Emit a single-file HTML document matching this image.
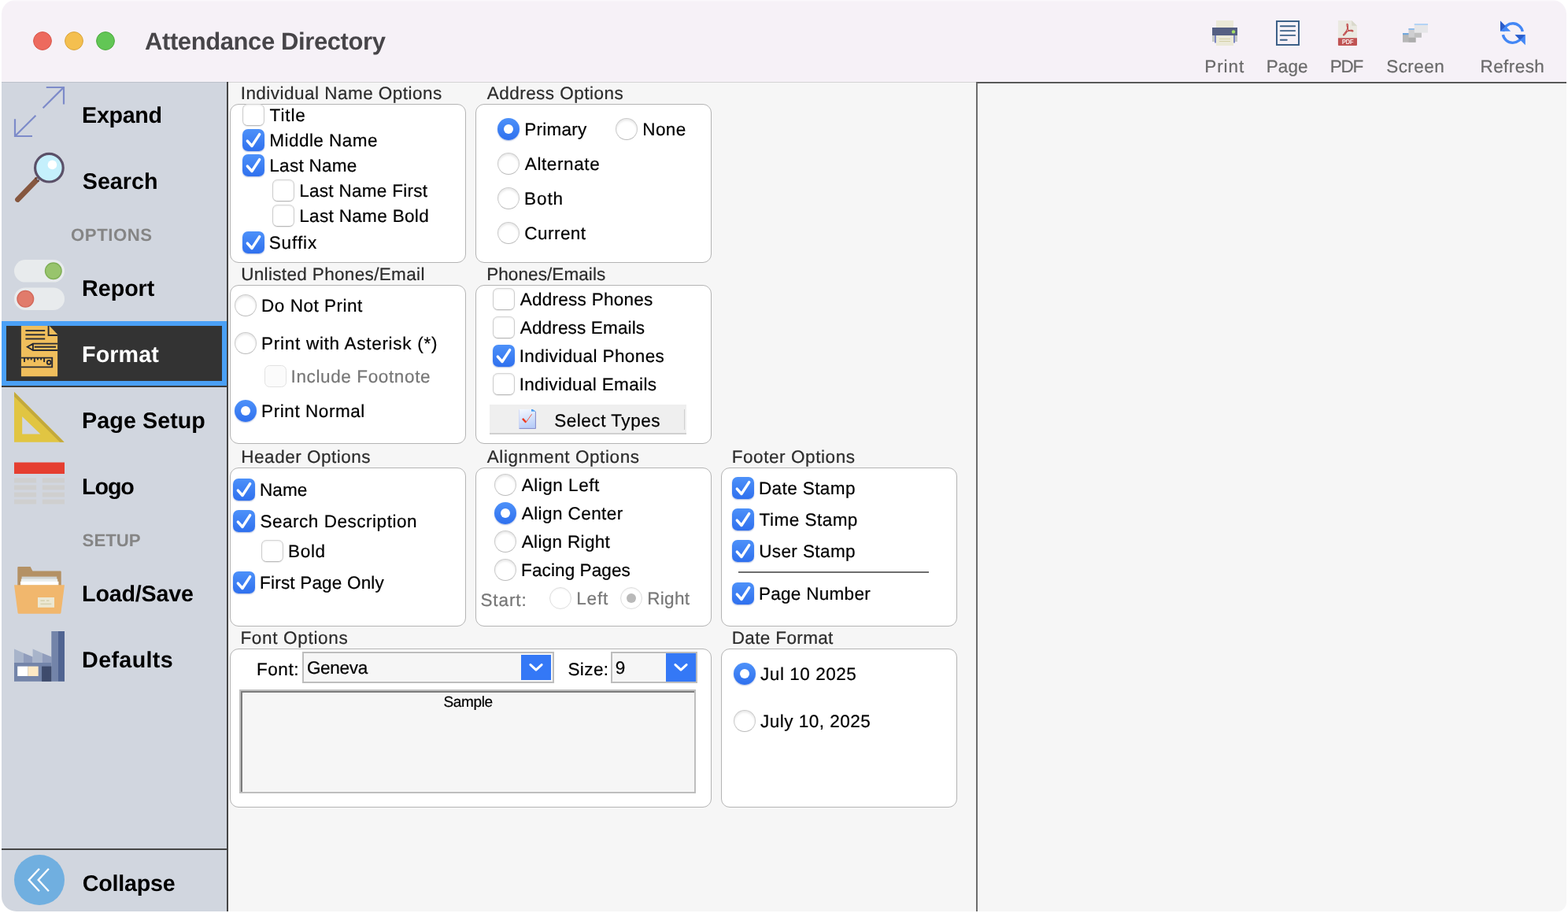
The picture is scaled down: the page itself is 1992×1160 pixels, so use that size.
<!DOCTYPE html>
<html lang="en"><head><meta charset="utf-8"><title>Attendance Directory</title>
<style>
*{box-sizing:border-box;margin:0;padding:0}
html,body{width:1992px;height:1160px;overflow:hidden;background:#fff}
body{font-family:"Liberation Sans",sans-serif;position:relative}
#win{position:absolute;left:0;top:0;width:1992px;height:1160px;clip-path:inset(0px 2px 2px 2px round 18px 18px 12px 19px);will-change:transform;background:#f6f6f6}
#win *{position:absolute}
#tb{left:0;top:0;width:1992px;height:104px;background:linear-gradient(#faf8fb 0,#faf8fb 1px,#f8f4f9 1px,#f8f4f9 2px,#f6f1f7 2px)}
#side{left:0;top:104px;width:288px;height:1056px;background:#d1d6df}
#sidetop{left:0;top:104px;width:288px;height:1px;background:#bcc1cb}
#sideb{left:288px;top:104px;width:2px;height:1056px;background:#454545}
#cline{left:290px;top:104px;width:950px;height:1px;background:#d4d4d4}
#pv{left:1240px;top:104px;width:752px;height:1056px;border-left:2px solid #6c6c6c;border-top:2px solid #585858;background:#f6f6f6}
#pvin{left:1242px;top:106px;width:750px;height:1px;background:#fdfdfd}
.t{white-space:nowrap;color:#000;text-rendering:geometricPrecision;-webkit-text-stroke:0.22px currentColor}
.gb{background:#fff;border:1px solid #b4b4b4;border-radius:11px}
.t.b{-webkit-text-stroke:0}
svg{overflow:visible}

.cb{width:28px;height:28px;border-radius:7px}
.cb.on{background:linear-gradient(#4d91f9,#2f70ee);box-shadow:0 1px 1.5px rgba(20,60,160,.35)}
.cb.off{background:#fff;border:1px solid #cdcdcd;border-bottom-color:#b9b9b9;border-top-color:#d6d6d6;box-shadow:inset 0 1px 2px rgba(0,0,0,.07),0 0.5px 1px rgba(0,0,0,.08);border-radius:6.5px}
.cb.off.dis{border-color:#e2e2e2;box-shadow:none;background:#fbfbfb}
.rb{width:28px;height:28px;border-radius:50%}
.rb.on{background:linear-gradient(#4d91f9,#2f70ee);box-shadow:0 1px 1.5px rgba(20,60,160,.35)}
.rb.on i{left:8px;top:8px;width:12px;height:12px;border-radius:50%;background:#fff}
.rb.off{background:#fff;border:1px solid #cbcbcb;border-bottom-color:#bcbcbc;box-shadow:inset 0 2px 3px rgba(0,0,0,.10)}
.rb.off.dis{border-color:#dedede;box-shadow:inset 0 1px 2px rgba(0,0,0,.06)}
.rb.off i.g{left:7px;top:7px;width:12px;height:12px;border-radius:50%;background:#b9b9b9}

#selbtn{background:#efefef;border-bottom:2px solid #d0d0d0}
.combo{background:#f6f6f6;border:2px solid #bdbdbd}
.cbtn{background:#3478f6}
#sample{background:#f6f6f6;border:2px solid #bebebe;box-shadow:inset 2px 2px 0 0 #7b7b7b,inset 3px 3px 0 0 #fdfdfd}
</style></head>
<body>
<div id="win"><div id="tb"></div><div id="side"></div><div id="sidetop"></div><div id="sideb"></div><div id="cline"></div><div id="pv"></div><div id="pvin"></div><div id="sepline" style="left:0;top:1078px;width:288px;height:2px;background:#454545"></div><div style="left:0;top:408px;width:288px;height:82px;background:#4aa0f6"></div>
<div style="left:8px;top:414px;width:274px;height:70px;background:#333333"></div>
<div style="left:0;top:490px;width:288px;height:2px;background:#3a3a3a"></div>
<svg width="288" height="84" viewBox="0 408 288 84" style="left:0;top:408px">
<path d="M26.9 414 H62.8 L73.1 424.9 V478.3 H26.9 Z" fill="#f0be5c"/>
<g fill="none" stroke="#272a34" stroke-width="1.9">
<path d="M61.6 414 V426 H73.1"/>
<path d="M32.4 420.1 H57.2"/>
<path d="M32.4 425.3 H57.2"/>
<path d="M32.4 430.5 H57.2"/>
<path d="M73.1 436.6 H41.9 L34.8 440.8 L41.9 445 H73.1 M41.9 436.6 V445 M43.8 440.8 H71"/>
<path d="M26.9 454.6 H66.2 V466.4 H26.9"/>
<path d="M31 454.6 V460"/>
<path d="M35.5 454.6 V457.4"/>
<path d="M39.7 454.6 V457.4"/>
<path d="M43.8 454.6 V460"/>
<path d="M47.9 454.6 V457.4"/>
<path d="M52.1 454.6 V457.4"/>
<path d="M56.1 454.6 V460"/>
<circle cx="62.2" cy="460.4" r="2.4"/>
</g></svg><svg id="ico" width="1992" height="1160" viewBox="0 0 1992 1160" style="left:0;top:0">
<defs><filter id="blr" x="-10%" y="-10%" width="120%" height="120%"><feGaussianBlur stdDeviation="0.45"/></filter></defs>
<circle cx="54" cy="52" r="11.4" fill="#ed6a5e" stroke="#d8554a" stroke-width="1"/>
<circle cx="94" cy="52" r="11.4" fill="#f4bf4f" stroke="#d9a43a" stroke-width="1"/>
<circle cx="134" cy="52" r="11.4" fill="#62c655" stroke="#4ba93d" stroke-width="1"/>
<rect x="1545" y="26" width="22" height="10" fill="#ebe9d8"/>
<rect x="1540" y="44" width="4" height="9" fill="#c5c8c6"/><rect x="1568" y="44" width="4" height="9" fill="#c5c8c6"/>
<rect x="1543" y="44" width="2" height="10.5" fill="#7b85c1"/><rect x="1567" y="44" width="2" height="10.5" fill="#7b85c1"/>
<rect x="1545" y="44" width="22" height="14" fill="#ebe9d8"/>
<rect x="1540" y="35" width="32" height="10" fill="#555f82"/>
<circle cx="1567" cy="40.4" r="2.2" fill="#a6e066"/>
<rect x="1549" y="49" width="14" height="1" fill="#d3cfa6"/><rect x="1549" y="52" width="14" height="1" fill="#d3cfa6"/>
<rect x="1622" y="27" width="28" height="30" fill="none" stroke="#3d6088" stroke-width="2"/>
<path d="M1626.8 33.2 H1645.2" stroke="#3d6088" stroke-width="1.9" stroke-linecap="round"/>
<path d="M1626.8 39.1 H1645.2" stroke="#3d6088" stroke-width="1.9" stroke-linecap="round"/>
<path d="M1626.8 44.9 H1645.2" stroke="#3d6088" stroke-width="1.9" stroke-linecap="round"/>
<path d="M1626.8 50.8 H1634.8" stroke="#3d6088" stroke-width="1.9" stroke-linecap="round"/>
<path d="M1699.9 26 H1717.2 L1724 32.8 V48.2 H1699.9 Z" fill="#eae9e1"/>
<path d="M1717.2 26 L1724 32.8 H1717.2 Z" fill="#d9d8cb"/>
<path d="M1699.9 48.2 H1724 V56.9 Q1724 57.9 1723 57.9 H1700.9 Q1699.9 57.9 1699.9 56.9 Z" fill="#c05353"/>
<text x="1705" y="56" font-family="Liberation Sans, sans-serif" font-weight="400" font-size="8.3" fill="#fff" stroke="#fff" stroke-width="0.2" textLength="14.4" lengthAdjust="spacingAndGlyphs">PDF</text>
<path d="M1711.6 30.2 C1710.6 30.2 1710.8 33 1711.9 35.6 C1711.3 38.2 1709.4 41.3 1707.3 43.2 C1705.6 44.6 1706.6 45.6 1707.9 44.4 C1709.5 42.9 1710.6 41.2 1711.4 39.9 C1713.4 39.3 1715.8 39.0 1717.6 39.8 C1719.4 40.6 1719.6 38.8 1717.6 38.4 C1716 38.1 1714.2 38.3 1712.8 38.7 C1712.2 37 1712.6 33.6 1712.4 31.6 C1712.3 30.6 1712 30.2 1711.6 30.2 Z" fill="none" stroke="#c04a4a" stroke-width="1.1" stroke-linejoin="round"/>
<g filter="url(#blr)">
<rect x="1782" y="42" width="16.5" height="11.7" fill="#b7b7b7"/><rect x="1789.5" y="47.6" width="9" height="6.1" fill="#adadad"/><rect x="1782" y="42" width="8" height="2.2" fill="#72a7dc"/>
<rect x="1789.5" y="36" width="16.4" height="11.6" fill="#cfcfd1"/><rect x="1796.8" y="41.6" width="9.1" height="6" fill="#c0c0c0"/><rect x="1789.5" y="36" width="7.5" height="2" fill="#8fbbe8"/>
<rect x="1796.8" y="30" width="17.2" height="11.6" fill="#e6e6e8"/><rect x="1796.8" y="30" width="17.2" height="2" fill="#b4d3f5"/>
</g>
<path d="M1909.6 39.8 A12.6 12.6 0 0 1 1934.3 40" fill="none" stroke="#4387f5" stroke-width="3.4"/>
<path d="M1934.1 44.3 A12.6 12.6 0 0 1 1909.4 44.2" fill="none" stroke="#4387f5" stroke-width="3.4"/>
<path d="M1906 26.6 V39.8 H1919.2 Z" fill="#4387f5"/><path d="M1906 26.6 V39.8 L1912.6 33.2 Z" fill="#2b5cc9"/>
<path d="M1937.8 57.2 V44.3 H1924.6 Z" fill="#4387f5"/><path d="M1924.6 44.3 H1937.8 L1931.2 50.8 Z" fill="#2b5cc9"/>
<g fill="none" stroke="#7d8bc9" stroke-width="2.2" stroke-linecap="butt"><path d="M54.6 137.2 L81 110.9"/><path d="M58.8 111 H81 V132.6"/><path d="M45.4 146.8 L19 173"/><path d="M41 173 H19 V151.2"/></g>
<path d="M46.6 228.6 L22.4 253.6" stroke="#86573f" stroke-width="6.6" stroke-linecap="round"/>
<path d="M44.5 225.8 L49.4 230.7" stroke="#5c3a30" stroke-width="1.6"/>
<path d="M50.6 225.2 L47.2 228.6" stroke="#9b9aa8" stroke-width="2.6"/>
<circle cx="62.4" cy="213.2" r="17.8" fill="#c5f0fc" stroke="#5b5068" stroke-width="3.2"/>
<circle cx="66.4" cy="209.4" r="5.8" fill="#fff"/>
<rect x="18" y="330" width="64" height="28.6" rx="14.3" fill="#e8ebed"/>
<circle cx="67.8" cy="344.3" r="10.3" fill="#98c46c" stroke="#7fae55" stroke-width="1.4"/>
<rect x="18" y="365.4" width="64" height="28.6" rx="14.3" fill="#e8ebed"/>
<circle cx="32.3" cy="379.7" r="10.3" fill="#e17b6b" stroke="#d3695b" stroke-width="1.4"/>
<path d="M18 498 L81.6 561.8 H18 Z M28.2 529.2 V551.6 H51.4 Z" fill="#e1c542" fill-rule="evenodd"/>
<path d="M18 498 L81.6 561.8 H76 L18 503.8 Z" fill="#c3a93c"/>
<rect x="18" y="587.5" width="64" height="14.5" fill="#e53e30"/>
<rect x="18" y="607.4" width="28.2" height="6" fill="#cfcfcf"/><rect x="53.8" y="607.4" width="28.2" height="6" fill="#cfcfcf"/>
<rect x="18" y="616.4" width="28.2" height="6" fill="#cfcfcf"/><rect x="53.8" y="616.4" width="28.2" height="6" fill="#cfcfcf"/>
<rect x="18" y="625.5" width="28.2" height="6" fill="#cfcfcf"/><rect x="53.8" y="625.5" width="28.2" height="6" fill="#cfcfcf"/>
<rect x="18" y="634.5" width="28.2" height="6" fill="#cfcfcf"/><rect x="53.8" y="634.5" width="28.2" height="6" fill="#cfcfcf"/>
<path d="M22.3 721 Q22.3 720 23.3 720 H38.6 L41.4 725.5 H76.7 Q77.7 725.5 77.7 726.5 V744 H22.3 Z" fill="#b49164"/>
<rect x="27.6" y="732.6" width="44.6" height="4" fill="#cfd3d3"/>
<rect x="26.8" y="735.6" width="46.4" height="4" fill="#e8eded"/>
<rect x="26" y="738.8" width="48.4" height="5" fill="#ffffff"/>
<path d="M18 743.2 H82 L77.4 778.8 Q77.2 779.8 76.2 779.8 H23.8 Q22.8 779.8 22.6 778.8 Z" fill="#f1b76d"/>
<rect x="48" y="759" width="21" height="12.8" fill="#ece8d3"/>
<rect x="51.4" y="762.4" width="5.4" height="1.6" fill="#d6d2b0"/><rect x="59" y="762.4" width="3.4" height="1.6" fill="#d6d2b0"/><rect x="51.4" y="766.6" width="14" height="1.6" fill="#d6d2b0"/>
<rect x="18" y="842" width="47.4" height="23.8" fill="#7384a9"/>
<path d="M18 824.6 L30 829.8 V842 H18 Z" fill="#a8b4ca"/><path d="M30 829.8 L41.6 834.6 V842 H30 Z" fill="#909dbc"/>
<path d="M41.6 824.6 L53.6 829.8 V842 H41.6 Z" fill="#a8b4ca"/><path d="M53.6 829.8 L65.4 834.6 V842 H53.6 Z" fill="#909dbc"/>
<rect x="65.3" y="802" width="8.7" height="63.8" fill="#7384a9"/><rect x="74" y="802" width="8" height="63.8" fill="#506491"/>
<rect x="22.2" y="846.6" width="13.2" height="12.4" fill="#ffffff"/><rect x="35.4" y="846.6" width="13.3" height="12.4" fill="#fce8c4"/>
<rect x="53.1" y="846.6" width="12.2" height="19.2" fill="#3e4b6c"/>
<circle cx="50" cy="1118" r="32" fill="#70afe0"/>
<g fill="none" stroke="#fff" stroke-width="2.3" stroke-linecap="butt" stroke-linejoin="miter"><path d="M49.9 1103.8 L36.7 1118 L49.9 1132.2"/><path d="M61.9 1103.8 L48.7 1118 L61.9 1132.2"/></g>
</svg><div class="gb" style="left:292px;top:132px;width:300px;height:202px"></div>
<div class="gb" style="left:604px;top:132px;width:300px;height:202px"></div>
<div class="gb" style="left:292px;top:362px;width:300px;height:202px"></div>
<div class="gb" style="left:604px;top:362px;width:300px;height:202px"></div>
<div class="gb" style="left:292px;top:594px;width:300px;height:202px"></div>
<div class="gb" style="left:604px;top:594px;width:300px;height:202px"></div>
<div class="gb" style="left:916px;top:594px;width:300px;height:202px"></div>
<div class="gb" style="left:292px;top:824px;width:612px;height:202px"></div>
<div class="gb" style="left:916px;top:824px;width:300px;height:202px"></div>
<div class="cb off" style="left:308px;top:132px"></div>
<div class="cb on" style="left:308px;top:164px"><svg width="28" height="28" viewBox="0 0 28 28" style="left:0;top:0"><path d="M6.3 15.1 L12 21.5 L21.7 6.6" fill="none" stroke="#fff" stroke-width="3.4" stroke-linecap="round" stroke-linejoin="round"/></svg></div>
<div class="cb on" style="left:308px;top:196px"><svg width="28" height="28" viewBox="0 0 28 28" style="left:0;top:0"><path d="M6.3 15.1 L12 21.5 L21.7 6.6" fill="none" stroke="#fff" stroke-width="3.4" stroke-linecap="round" stroke-linejoin="round"/></svg></div>
<div class="cb off" style="left:346px;top:228px"></div>
<div class="cb off" style="left:346px;top:260px"></div>
<div class="cb on" style="left:308px;top:294px"><svg width="28" height="28" viewBox="0 0 28 28" style="left:0;top:0"><path d="M6.3 15.1 L12 21.5 L21.7 6.6" fill="none" stroke="#fff" stroke-width="3.4" stroke-linecap="round" stroke-linejoin="round"/></svg></div>
<div class="rb on" style="left:632px;top:150px"><i></i></div>
<div class="rb off" style="left:782px;top:150px"></div>
<div class="rb off" style="left:632px;top:194px"></div>
<div class="rb off" style="left:632px;top:238px"></div>
<div class="rb off" style="left:632px;top:282px"></div>
<div class="rb off" style="left:298px;top:374px"></div>
<div class="rb off" style="left:298px;top:422px"></div>
<div class="cb off dis" style="left:336px;top:464px"></div>
<div class="rb on" style="left:298px;top:508px"><i></i></div>
<div class="cb off" style="left:626px;top:366px"></div>
<div class="cb off" style="left:626px;top:402px"></div>
<div class="cb on" style="left:626px;top:438px"><svg width="28" height="28" viewBox="0 0 28 28" style="left:0;top:0"><path d="M6.3 15.1 L12 21.5 L21.7 6.6" fill="none" stroke="#fff" stroke-width="3.4" stroke-linecap="round" stroke-linejoin="round"/></svg></div>
<div class="cb off" style="left:626px;top:474px"></div>
<div id="selbtn" style="left:622px;top:514px;width:250px;height:38px"></div>
<div style="left:869px;top:520px;width:1px;height:26px;background:#cfcfcf"></div>
<svg width="24" height="28" viewBox="0 0 24 28" style="left:658px;top:518px">
<defs><linearGradient id="pg1" x1="0" y1="0" x2="0.25" y2="1"><stop offset="0" stop-color="#f6faff"/><stop offset="1" stop-color="#b9cef8"/></linearGradient></defs>
<path d="M1.2 2 H17.4 L22.9 4.8 V26.9 H1.2 Z" fill="url(#pg1)"/>
<path d="M22.4 5 V26.4 H1.6" fill="none" stroke="#8589c8" stroke-width="1"/>
<path d="M1.6 2.4 V26.4" fill="none" stroke="#c9d2f2" stroke-width="0.8"/>
<path d="M17 2 H18.6 L22.9 4.8 H17 Z" fill="#4a9cee"/>
<path d="M5.9 13.9 L10.3 18.6" fill="none" stroke="#ee3a1f" stroke-width="2.3"/>
<path d="M10 18.8 L17.6 8.2" fill="none" stroke="#f0604a" stroke-width="1"/>
</svg>
<div class="cb on" style="left:296px;top:608px"><svg width="28" height="28" viewBox="0 0 28 28" style="left:0;top:0"><path d="M6.3 15.1 L12 21.5 L21.7 6.6" fill="none" stroke="#fff" stroke-width="3.4" stroke-linecap="round" stroke-linejoin="round"/></svg></div>
<div class="cb on" style="left:296px;top:648px"><svg width="28" height="28" viewBox="0 0 28 28" style="left:0;top:0"><path d="M6.3 15.1 L12 21.5 L21.7 6.6" fill="none" stroke="#fff" stroke-width="3.4" stroke-linecap="round" stroke-linejoin="round"/></svg></div>
<div class="cb off" style="left:332px;top:686px"></div>
<div class="cb on" style="left:296px;top:726px"><svg width="28" height="28" viewBox="0 0 28 28" style="left:0;top:0"><path d="M6.3 15.1 L12 21.5 L21.7 6.6" fill="none" stroke="#fff" stroke-width="3.4" stroke-linecap="round" stroke-linejoin="round"/></svg></div>
<div class="rb off" style="left:628px;top:602px"></div>
<div class="rb on" style="left:628px;top:638px"><i></i></div>
<div class="rb off" style="left:628px;top:674px"></div>
<div class="rb off" style="left:628px;top:710px"></div>
<div class="rb off dis" style="left:698px;top:746px"></div>
<div class="rb off dis" style="left:788px;top:746px"><i class="g"></i></div>
<div class="cb on" style="left:930px;top:606px"><svg width="28" height="28" viewBox="0 0 28 28" style="left:0;top:0"><path d="M6.3 15.1 L12 21.5 L21.7 6.6" fill="none" stroke="#fff" stroke-width="3.4" stroke-linecap="round" stroke-linejoin="round"/></svg></div>
<div class="cb on" style="left:930px;top:646px"><svg width="28" height="28" viewBox="0 0 28 28" style="left:0;top:0"><path d="M6.3 15.1 L12 21.5 L21.7 6.6" fill="none" stroke="#fff" stroke-width="3.4" stroke-linecap="round" stroke-linejoin="round"/></svg></div>
<div class="cb on" style="left:930px;top:686px"><svg width="28" height="28" viewBox="0 0 28 28" style="left:0;top:0"><path d="M6.3 15.1 L12 21.5 L21.7 6.6" fill="none" stroke="#fff" stroke-width="3.4" stroke-linecap="round" stroke-linejoin="round"/></svg></div>
<div class="cb on" style="left:930px;top:740px"><svg width="28" height="28" viewBox="0 0 28 28" style="left:0;top:0"><path d="M6.3 15.1 L12 21.5 L21.7 6.6" fill="none" stroke="#fff" stroke-width="3.4" stroke-linecap="round" stroke-linejoin="round"/></svg></div>
<div style="left:938px;top:726px;width:242px;height:2px;background:#6e6e6e"></div>
<div class="combo" style="left:384px;top:828px;width:320px;height:40px"></div>
<div class="cbtn" style="left:662px;top:832px;width:38px;height:32px"></div>
<svg width="38" height="32" viewBox="0 0 38 32" style="left:662px;top:832px"><path d="M11.9 12.6 L19 19.1 L26.1 12.6" fill="none" stroke="#fff" stroke-width="3" stroke-linecap="round" stroke-linejoin="round"/></svg>
<div class="combo" style="left:776px;top:828px;width:110px;height:40px"></div>
<div class="cbtn" style="left:846px;top:830px;width:38px;height:36px"></div>
<svg width="38" height="36" viewBox="0 0 38 36" style="left:846px;top:830px"><path d="M11.9 14.6 L19 21.1 L26.1 14.6" fill="none" stroke="#fff" stroke-width="3" stroke-linecap="round" stroke-linejoin="round"/></svg>
<div id="sample" style="left:304px;top:876px;width:580px;height:132px"></div>
<div class="rb on" style="left:932px;top:842px"><i></i></div>
<div class="rb off" style="left:932px;top:902px"></div><div class="t b" id="title" style="left:183.97px;top:37px;font-size:31px;line-height:31px;font-weight:700;letter-spacing:-0.397px;color:#474549">Attendance Directory</div>
<div class="t" id="tPrint" style="left:1530.20px;top:74px;font-size:22.5px;line-height:22.5px;font-weight:400;letter-spacing:0.934px;color:#6a6a6a">Print</div>
<div class="t" id="tPage" style="left:1608.69px;top:74px;font-size:22.5px;line-height:22.5px;font-weight:400;letter-spacing:0.090px;color:#6a6a6a">Page</div>
<div class="t" id="tPDF" style="left:1689.84px;top:74px;font-size:22.5px;line-height:22.5px;font-weight:400;letter-spacing:-1.284px;color:#6a6a6a">PDF</div>
<div class="t" id="tScreen" style="left:1761.14px;top:74px;font-size:22.5px;line-height:22.5px;font-weight:400;letter-spacing:0.493px;color:#6a6a6a">Screen</div>
<div class="t" id="tRefresh" style="left:1880.48px;top:74px;font-size:22.5px;line-height:22.5px;font-weight:400;letter-spacing:0.436px;color:#6a6a6a">Refresh</div>
<div class="t b" id="sExpand" style="left:104.12px;top:133px;font-size:28.7px;line-height:28.7px;font-weight:700;letter-spacing:-0.341px;color:#000">Expand</div>
<div class="t b" id="sSearch" style="left:104.76px;top:217px;font-size:28.7px;line-height:28.7px;font-weight:700;letter-spacing:0.013px;color:#000">Search</div>
<div class="t b" id="sOptions" style="left:89.98px;top:288px;font-size:22.2px;line-height:22.2px;font-weight:700;letter-spacing:0.550px;color:#858585">OPTIONS</div>
<div class="t b" id="sReport" style="left:104.12px;top:353px;font-size:28.7px;line-height:28.7px;font-weight:700;letter-spacing:-0.054px;color:#000">Report</div>
<div class="t b" id="sFormat" style="left:104.12px;top:437px;font-size:28.7px;line-height:28.7px;font-weight:700;letter-spacing:0.093px;color:#fff">Format</div>
<div class="t b" id="sPageSetup" style="left:104.12px;top:521px;font-size:28.7px;line-height:28.7px;font-weight:700;letter-spacing:0.060px;color:#000">Page Setup</div>
<div class="t b" id="sLogo" style="left:104.12px;top:605px;font-size:28.7px;line-height:28.7px;font-weight:700;letter-spacing:-1.103px;color:#000">Logo</div>
<div class="t b" id="sSetup" style="left:104.61px;top:676px;font-size:22.2px;line-height:22.2px;font-weight:700;letter-spacing:-0.008px;color:#858585">SETUP</div>
<div class="t b" id="sLoadSave" style="left:104.12px;top:741px;font-size:28.7px;line-height:28.7px;font-weight:700;letter-spacing:-0.212px;color:#000">Load/Save</div>
<div class="t b" id="sDefaults" style="left:104.12px;top:825px;font-size:28.7px;line-height:28.7px;font-weight:700;letter-spacing:0.337px;color:#000">Defaults</div>
<div class="t b" id="sCollapse" style="left:104.78px;top:1109px;font-size:28.7px;line-height:28.7px;font-weight:700;letter-spacing:-0.242px;color:#000">Collapse</div>
<div class="t" id="gIndiv" style="left:305.67px;top:108px;font-size:22.5px;line-height:22.5px;font-weight:400;letter-spacing:0.476px;color:#2c2c2c">Individual Name Options</div>
<div class="t" id="gAddr" style="left:618.73px;top:108px;font-size:22.5px;line-height:22.5px;font-weight:400;letter-spacing:0.472px;color:#2c2c2c">Address Options</div>
<div class="t" id="gUnl" style="left:306.13px;top:338px;font-size:22.5px;line-height:22.5px;font-weight:400;letter-spacing:0.346px;color:#2c2c2c">Unlisted Phones/Email</div>
<div class="t" id="gPh" style="left:618.15px;top:338px;font-size:22.5px;line-height:22.5px;font-weight:400;letter-spacing:0.087px;color:#2c2c2c">Phones/Emails</div>
<div class="t" id="gHdr" style="left:306.33px;top:570px;font-size:22.5px;line-height:22.5px;font-weight:400;letter-spacing:0.508px;color:#2c2c2c">Header Options</div>
<div class="t" id="gAlign" style="left:618.73px;top:570px;font-size:22.5px;line-height:22.5px;font-weight:400;letter-spacing:0.590px;color:#2c2c2c">Alignment Options</div>
<div class="t" id="gFoot" style="left:929.72px;top:570px;font-size:22.5px;line-height:22.5px;font-weight:400;letter-spacing:0.572px;color:#2c2c2c">Footer Options</div>
<div class="t" id="gFont" style="left:305.40px;top:800px;font-size:22.5px;line-height:22.5px;font-weight:400;letter-spacing:0.687px;color:#2c2c2c">Font Options</div>
<div class="t" id="gDate" style="left:929.72px;top:800px;font-size:22.5px;line-height:22.5px;font-weight:400;letter-spacing:0.362px;color:#2c2c2c">Date Format</div>
<div class="t" id="b1a" style="left:342.58px;top:136px;font-size:22.5px;line-height:22.5px;font-weight:400;letter-spacing:0.904px;color:#000">Title</div>
<div class="t" id="b1b" style="left:342.29px;top:168px;font-size:22.5px;line-height:22.5px;font-weight:400;letter-spacing:0.460px;color:#000">Middle Name</div>
<div class="t" id="b1c" style="left:342.29px;top:200px;font-size:22.5px;line-height:22.5px;font-weight:400;letter-spacing:0.284px;color:#000">Last Name</div>
<div class="t" id="b1d" style="left:380.18px;top:232px;font-size:22.5px;line-height:22.5px;font-weight:400;letter-spacing:0.291px;color:#000">Last Name First</div>
<div class="t" id="b1e" style="left:380.18px;top:264px;font-size:22.5px;line-height:22.5px;font-weight:400;letter-spacing:0.344px;color:#000">Last Name Bold</div>
<div class="t" id="b1f" style="left:341.66px;top:298px;font-size:22.5px;line-height:22.5px;font-weight:400;letter-spacing:0.956px;color:#000">Suffix</div>
<div class="t" id="b2a" style="left:666.29px;top:154px;font-size:22.5px;line-height:22.5px;font-weight:400;letter-spacing:0.248px;color:#000">Primary</div>
<div class="t" id="b2b" style="left:816.33px;top:154px;font-size:22.5px;line-height:22.5px;font-weight:400;letter-spacing:0.357px;color:#000">None</div>
<div class="t" id="b2c" style="left:666.78px;top:198px;font-size:22.5px;line-height:22.5px;font-weight:400;letter-spacing:0.604px;color:#000">Alternate</div>
<div class="t" id="b2d" style="left:666.10px;top:242px;font-size:22.5px;line-height:22.5px;font-weight:400;letter-spacing:0.883px;color:#000">Both</div>
<div class="t" id="b2e" style="left:666.36px;top:286px;font-size:22.5px;line-height:22.5px;font-weight:400;letter-spacing:0.448px;color:#000">Current</div>
<div class="t" id="b3a" style="left:332.11px;top:378px;font-size:22.5px;line-height:22.5px;font-weight:400;letter-spacing:0.501px;color:#000">Do Not Print</div>
<div class="t" id="b3b" style="left:332.11px;top:426px;font-size:22.5px;line-height:22.5px;font-weight:400;letter-spacing:0.715px;color:#000">Print with Asterisk (*)</div>
<div class="t" id="b3c" style="left:369.58px;top:468px;font-size:22.5px;line-height:22.5px;font-weight:400;letter-spacing:0.621px;color:#777777">Include Footnote</div>
<div class="t" id="b3d" style="left:332.11px;top:512px;font-size:22.5px;line-height:22.5px;font-weight:400;letter-spacing:0.564px;color:#000">Print Normal</div>
<div class="t" id="b4a" style="left:660.78px;top:370px;font-size:22.5px;line-height:22.5px;font-weight:400;letter-spacing:0.260px;color:#000">Address Phones</div>
<div class="t" id="b4b" style="left:660.78px;top:406px;font-size:22.5px;line-height:22.5px;font-weight:400;letter-spacing:0.158px;color:#000">Address Emails</div>
<div class="t" id="b4c" style="left:659.67px;top:442px;font-size:22.5px;line-height:22.5px;font-weight:400;letter-spacing:0.411px;color:#000">Individual Phones</div>
<div class="t" id="b4d" style="left:659.67px;top:478px;font-size:22.5px;line-height:22.5px;font-weight:400;letter-spacing:0.344px;color:#000">Individual Emails</div>
<div class="t" id="b4e" style="left:704.14px;top:524px;font-size:22.5px;line-height:22.5px;font-weight:400;letter-spacing:0.544px;color:#000">Select Types</div>
<div class="t" id="b5a" style="left:330.04px;top:612px;font-size:22.5px;line-height:22.5px;font-weight:400;letter-spacing:0.068px;color:#000">Name</div>
<div class="t" id="b5b" style="left:330.38px;top:652px;font-size:22.5px;line-height:22.5px;font-weight:400;letter-spacing:0.533px;color:#000">Search Description</div>
<div class="t" id="b5c" style="left:366.10px;top:690px;font-size:22.5px;line-height:22.5px;font-weight:400;letter-spacing:0.642px;color:#000">Bold</div>
<div class="t" id="b5d" style="left:330.11px;top:730px;font-size:22.5px;line-height:22.5px;font-weight:400;letter-spacing:0.188px;color:#000">First Page Only</div>
<div class="t" id="b6a" style="left:662.78px;top:606px;font-size:22.5px;line-height:22.5px;font-weight:400;letter-spacing:0.511px;color:#000">Align Left</div>
<div class="t" id="b6b" style="left:662.78px;top:642px;font-size:22.5px;line-height:22.5px;font-weight:400;letter-spacing:0.416px;color:#000">Align Center</div>
<div class="t" id="b6c" style="left:662.78px;top:678px;font-size:22.5px;line-height:22.5px;font-weight:400;letter-spacing:0.330px;color:#000">Align Right</div>
<div class="t" id="b6d" style="left:662.11px;top:714px;font-size:22.5px;line-height:22.5px;font-weight:400;letter-spacing:0.102px;color:#000">Facing Pages</div>
<div class="t" id="b6e" style="left:610.39px;top:752px;font-size:22.5px;line-height:22.5px;font-weight:400;letter-spacing:0.928px;color:#777777">Start:</div>
<div class="t" id="b6f" style="left:732.33px;top:750px;font-size:22.5px;line-height:22.5px;font-weight:400;letter-spacing:0.780px;color:#777777">Left</div>
<div class="t" id="b6g" style="left:822.15px;top:750px;font-size:22.5px;line-height:22.5px;font-weight:400;letter-spacing:0.347px;color:#777777">Right</div>
<div class="t" id="b7a" style="left:963.94px;top:610px;font-size:22.5px;line-height:22.5px;font-weight:400;letter-spacing:0.409px;color:#000">Date Stamp</div>
<div class="t" id="b7b" style="left:964.52px;top:650px;font-size:22.5px;line-height:22.5px;font-weight:400;letter-spacing:0.491px;color:#000">Time Stamp</div>
<div class="t" id="b7c" style="left:964.13px;top:690px;font-size:22.5px;line-height:22.5px;font-weight:400;letter-spacing:0.405px;color:#000">User Stamp</div>
<div class="t" id="b7d" style="left:963.94px;top:744px;font-size:22.5px;line-height:22.5px;font-weight:400;letter-spacing:0.293px;color:#000">Page Number</div>
<div class="t" id="b8a" style="left:325.89px;top:840px;font-size:22.5px;line-height:22.5px;font-weight:400;letter-spacing:0.595px;color:#000">Font:</div>
<div class="t" id="b8b" style="left:389.94px;top:838px;font-size:22.5px;line-height:22.5px;font-weight:400;letter-spacing:-0.316px;color:#000">Geneva</div>
<div class="t" id="b8c" style="left:721.41px;top:840px;font-size:22.5px;line-height:22.5px;font-weight:400;letter-spacing:0.414px;color:#000">Size:</div>
<div class="t" id="b8d" style="left:781.72px;top:838px;font-size:22.5px;line-height:22.5px;font-weight:400;letter-spacing:0.000px;color:#000">9</div>
<div class="t" id="b8e" style="left:563.54px;top:883px;font-size:19px;line-height:19px;font-weight:400;letter-spacing:-0.356px;color:#000">Sample</div>
<div class="t" id="b9a" style="left:966.02px;top:846px;font-size:22.5px;line-height:22.5px;font-weight:400;letter-spacing:0.548px;color:#000">Jul 10 2025</div>
<div class="t" id="b9b" style="left:966.02px;top:906px;font-size:22.5px;line-height:22.5px;font-weight:400;letter-spacing:0.494px;color:#000">July 10, 2025</div></div>
</body></html>
